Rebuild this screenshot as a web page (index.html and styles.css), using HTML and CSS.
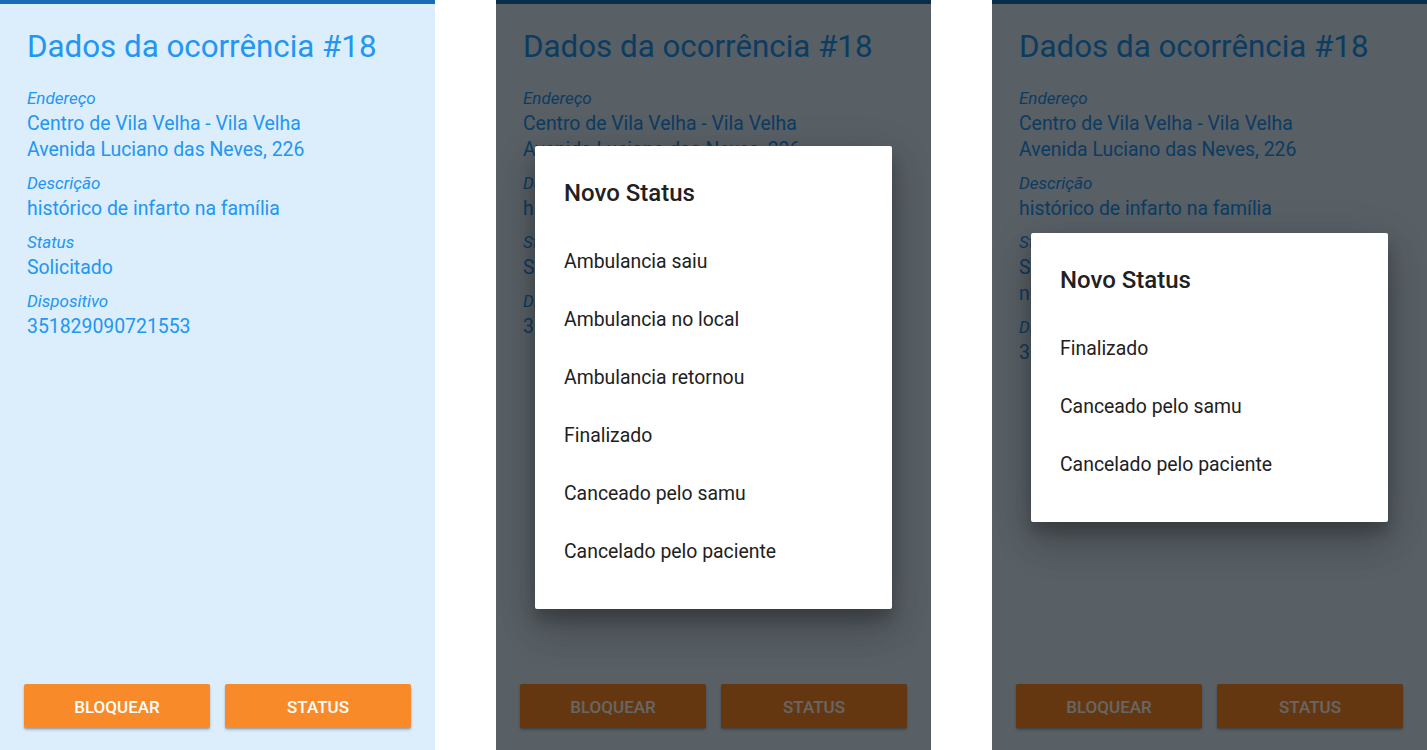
FILE: index.html
```html
<!DOCTYPE html>
<html lang="pt-BR">
<head>
<meta charset="utf-8">
<title>Dados da ocorrência #18</title>
<link rel="stylesheet" href="styles.css">
</head>
<body>
<div class="screens">
  <section class="phone">
    <div class="topbar"></div>
    <div class="content">
      <h1 class="title">Dados da ocorrência #18</h1>
      <div class="field">
        <div class="label">Endereço</div>
        <div class="value">Centro de Vila Velha - Vila Velha</div>
        <div class="value">Avenida Luciano das Neves, 226</div>
      </div>
      <div class="field">
        <div class="label">Descrição</div>
        <div class="value">histórico de infarto na família</div>
      </div>
      <div class="field">
        <div class="label">Status</div>
        <div class="value">Solicitado</div>
      </div>
      <div class="field">
        <div class="label">Dispositivo</div>
        <div class="value">351829090721553</div>
      </div>
    </div>
    <div class="actions">
      <button class="btn">BLOQUEAR</button>
      <button class="btn">STATUS</button>
    </div>
  </section>

  <section class="phone">
    <div class="topbar"></div>
    <div class="content">
      <h1 class="title">Dados da ocorrência #18</h1>
      <div class="field">
        <div class="label">Endereço</div>
        <div class="value">Centro de Vila Velha - Vila Velha</div>
        <div class="value">Avenida Luciano das Neves, 226</div>
      </div>
      <div class="field">
        <div class="label">Descrição</div>
        <div class="value">histórico de infarto na família</div>
      </div>
      <div class="field">
        <div class="label">Status</div>
        <div class="value">Solicitado</div>
      </div>
      <div class="field">
        <div class="label">Dispositivo</div>
        <div class="value">351829090721553</div>
      </div>
    </div>
    <div class="actions">
      <button class="btn">BLOQUEAR</button>
      <button class="btn">STATUS</button>
    </div>
    <div class="overlay">
      <div class="dialog">
        <div class="dialog-title">Novo Status</div>
        <ul class="options">
          <li class="option">Ambulancia saiu</li>
          <li class="option">Ambulancia no local</li>
          <li class="option">Ambulancia retornou</li>
          <li class="option">Finalizado</li>
          <li class="option">Canceado pelo samu</li>
          <li class="option">Cancelado pelo paciente</li>
        </ul>
      </div>
    </div>
  </section>

  <section class="phone">
    <div class="topbar"></div>
    <div class="content">
      <h1 class="title">Dados da ocorrência #18</h1>
      <div class="field">
        <div class="label">Endereço</div>
        <div class="value">Centro de Vila Velha - Vila Velha</div>
        <div class="value">Avenida Luciano das Neves, 226</div>
      </div>
      <div class="field">
        <div class="label">Descrição</div>
        <div class="value">histórico de infarto na família</div>
      </div>
      <div class="field">
        <div class="label">Status</div>
        <div class="value">Saída da ambulancia</div>
        <div class="value">no local</div>
      </div>
      <div class="field">
        <div class="label">Dispositivo</div>
        <div class="value">351829090721553</div>
      </div>
    </div>
    <div class="actions">
      <button class="btn">BLOQUEAR</button>
      <button class="btn">STATUS</button>
    </div>
    <div class="overlay">
      <div class="dialog">
        <div class="dialog-title">Novo Status</div>
        <ul class="options">
          <li class="option">Finalizado</li>
          <li class="option">Canceado pelo samu</li>
          <li class="option">Cancelado pelo paciente</li>
        </ul>
      </div>
    </div>
  </section>
</div>
</body>
</html>
```

FILE: styles.css
```css
* { box-sizing: border-box; }

html, body {
  margin: 0;
  padding: 0;
  background: #ffffff;
  font-family: Roboto, "Liberation Sans", sans-serif;
}

.screens {
  display: flex;
  gap: 61px;
  width: 1427px;
  height: 750px;
}

.phone {
  position: relative;
  width: 435px;
  height: 750px;
  flex: 0 0 435px;
  background: #dcedfc;
  display: flex;
  flex-direction: column;
  overflow: hidden;
}

.topbar {
  height: 4px;
  background: #1b6bb8;
  flex: 0 0 auto;
}

.content {
  flex: 1 1 auto;
  padding: 23px 27px 0;
  color: #2196f3;
}

.title {
  margin: 0 0 20px;
  font-size: 31.3px;
  line-height: 39px;
  font-weight: 400;
  white-space: nowrap;
}

.field + .field {
  margin-top: 8px;
}

.label {
  font-size: 17px;
  line-height: 25px;
  font-style: italic;
}

.value {
  font-size: 19.4px;
  line-height: 26px;
}

.actions {
  display: flex;
  gap: 15px;
  padding: 0 24px 22px;
}

.btn {
  flex: 1 1 0;
  height: 44px;
  border: 0;
  border-radius: 2px;
  background: #f98a29;
  color: #ffffff;
  font-family: Roboto, "Liberation Sans", sans-serif;
  font-size: 17px;
  font-weight: 500;
  line-height: 46px;
  box-shadow: 0 2px 3px rgba(0, 0, 0, 0.22), 0 1px 1px rgba(0, 0, 0, 0.12);
  padding: 0;
}

.overlay {
  position: absolute;
  inset: 0;
  background: rgba(0, 0, 0, 0.6);
  display: flex;
  align-items: center;
  justify-content: center;
  padding-top: 4px;
}

.dialog {
  width: 357px;
  background: #ffffff;
  border-radius: 2px;
  padding: 29px 29px 28px;
  box-shadow: 0 11px 15px rgba(0, 0, 0, 0.2), 0 24px 38px rgba(0, 0, 0, 0.14), 0 9px 46px rgba(0, 0, 0, 0.12);
  color: #212121;
}

.dialog-title {
  font-size: 24px;
  line-height: 34px;
  font-weight: 500;
  margin-bottom: 23px;
  padding-top: 1px;
}

.options {
  list-style: none;
  margin: 0;
  padding: 0;
}

.option {
  height: 58px;
  display: flex;
  align-items: center;
  font-size: 19.4px;
}
```
